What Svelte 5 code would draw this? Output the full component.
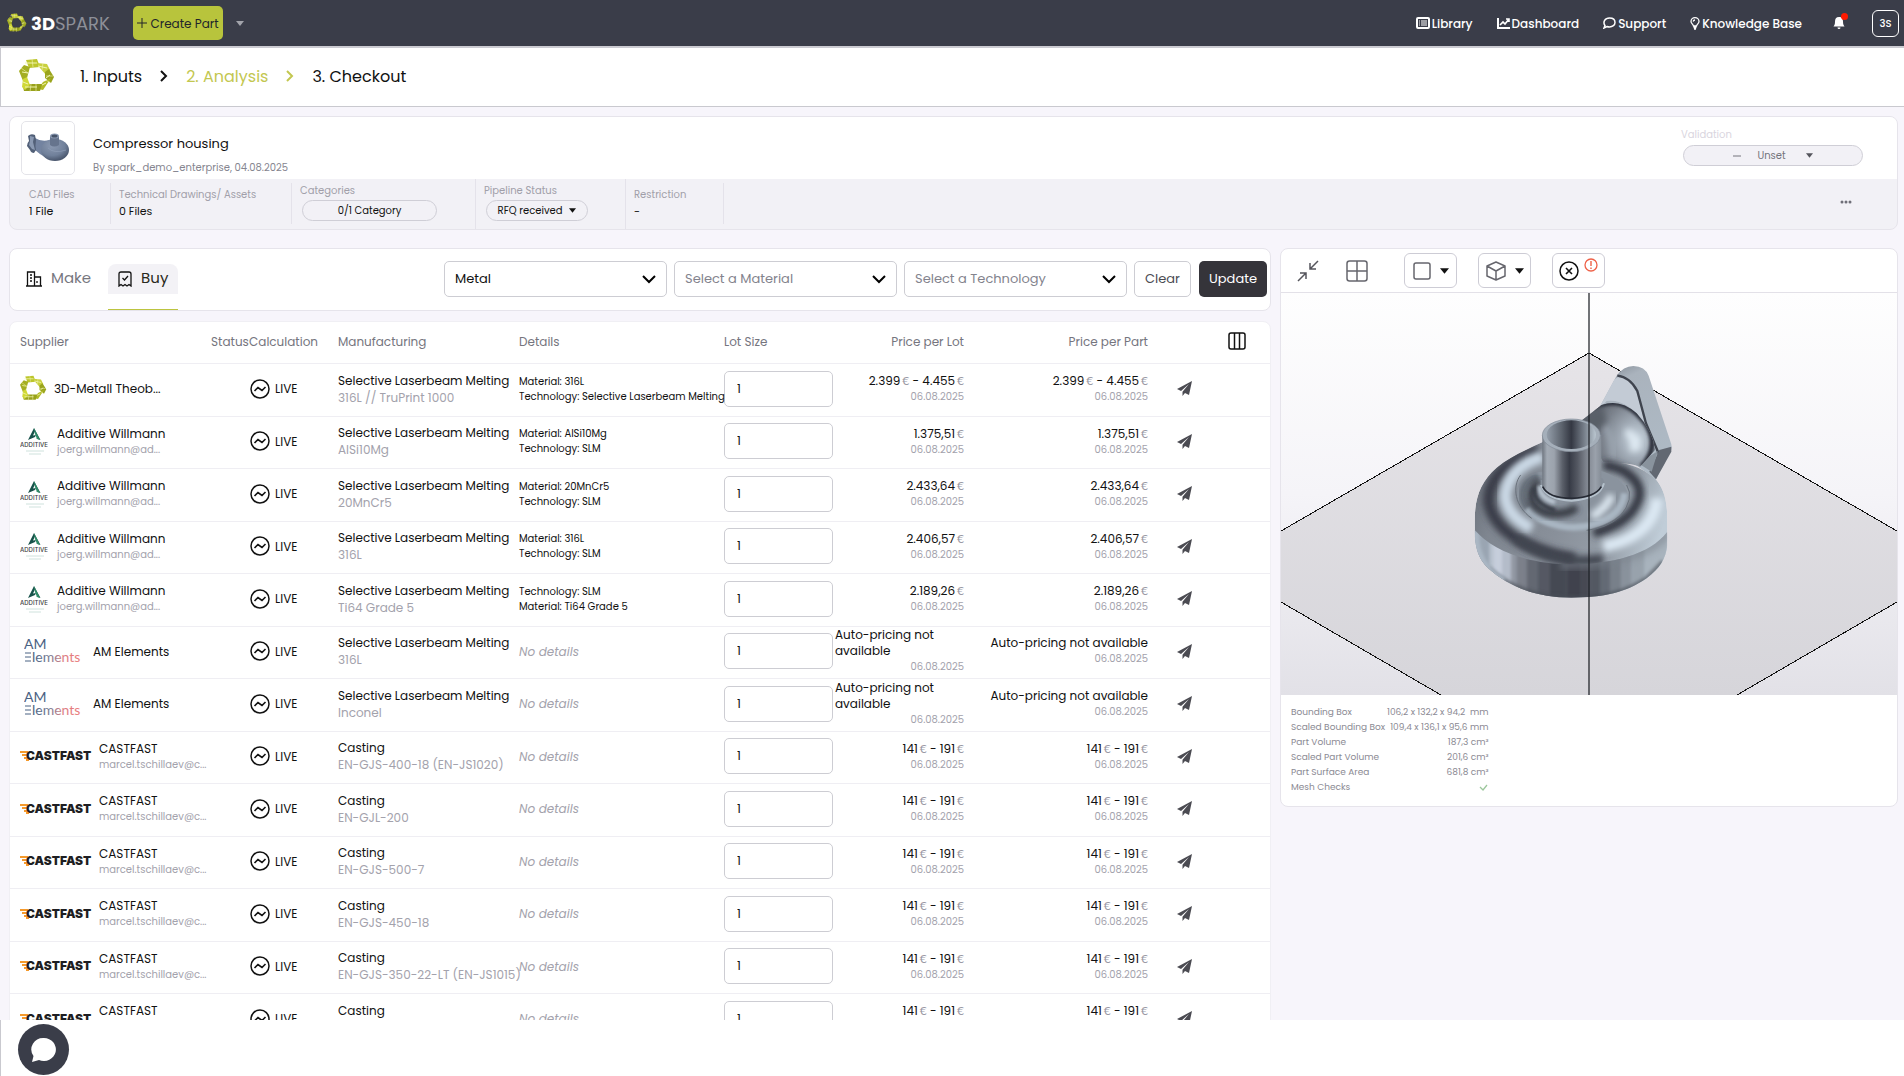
<script lang="ts">
	type Kind = 'spark' | 'additive' | 'am' | 'castfast';
	type Offer = {
		kind: Kind;
		supplier: string;
		mail?: string;
		process: string;
		material: string;
		details?: string[];
		price?: string[];
		lot: number;
	};

	const DATE = '06.08.2025';
	const SLM = 'Selective Laserbeam Melting';

	function additive(material: string, details: string[], price: string): Offer {
		return {
			kind: 'additive',
			supplier: 'Additive Willmann',
			mail: 'joerg.willmann@ad...',
			process: SLM,
			material,
			details,
			price: [price],
			lot: 1
		};
	}

	function castfast(material: string): Offer {
		return {
			kind: 'castfast',
			supplier: 'CASTFAST',
			mail: 'marcel.tschillaev@c...',
			process: 'Casting',
			material,
			price: ['141', '191'],
			lot: 1
		};
	}

	let offers: Offer[] = $state([
		{
			kind: 'spark',
			supplier: '3D-Metall Theob...',
			process: SLM,
			material: '316L // TruPrint 1000',
			details: ['Material: 316L', 'Technology: Selective Laserbeam Melting'],
			price: ['2.399', '4.455'],
			lot: 1
		},
		additive('AlSi10Mg', ['Material: AlSi10Mg', 'Technology: SLM'], '1.375,51'),
		additive('20MnCr5', ['Material: 20MnCr5', 'Technology: SLM'], '2.433,64'),
		additive('316L', ['Material: 316L', 'Technology: SLM'], '2.406,57'),
		additive('Ti64 Grade 5', ['Technology: SLM', 'Material: Ti64 Grade 5'], '2.189,26'),
		{ kind: 'am', supplier: 'AM Elements', process: SLM, material: '316L', lot: 1 },
		{ kind: 'am', supplier: 'AM Elements', process: SLM, material: 'Inconel', lot: 1 },
		castfast('EN-GJS-400-18 (EN-JS1020)'),
		castfast('EN-GJL-200'),
		castfast('EN-GJS-500-7'),
		castfast('EN-GJS-450-18'),
		castfast('EN-GJS-350-22-LT (EN-JS1015)'),
		castfast('')
	]);

	const stats = [
		['Bounding Box', '106,2 x 132,2 x 94,2  mm'],
		['Scaled Bounding Box', '109,4 x 136,1 x 95,6 mm'],
		['Part Volume', '187,3 cm³'],
		['Scaled Part Volume', '201,6 cm³'],
		['Part Surface Area', '681,8 cm³']
	];

	// Facets of the outer wall: x, width, shade
	const facets: [number, number, string][] = [
		[40, 48, '#9aa5b2'],
		[88, 14, '#b9c3cf'],
		[102, 24, '#c6cedb'],
		[126, 28, '#b4bcc9'],
		[154, 16, '#9298a3'],
		[170, 30, '#7c808a'],
		[200, 34, '#646872'],
		[234, 36, '#555963'],
		[270, 50, '#454953'],
		[320, 40, '#3f434d'],
		[360, 28, '#464a53'],
		[388, 32, '#535862'],
		[420, 30, '#646a74'],
		[450, 34, '#78808a'],
		[484, 30, '#89929c'],
		[514, 40, '#98a2ac'],
		[554, 70, '#a8b3bd']
	];
</script>

{#snippet sparkMark()}
	<svg class="mark" viewBox="0 0 36 36" aria-hidden="true">
		<path d="M7 2L18 1l3 8-11 1z" fill="#bcc52c" />
		<path d="M0 13l5-6 6 2-3 11-4 3z" fill="#a4ae22" />
		<path d="M18 5l10 1 3 6-4 5-6-7z" fill="#c9d03f" />
		<path d="M30 11l5 8-3 6-6-5 0-6z" fill="#9aa41c" />
		<path d="M32 20l-8 12-5-1 5-7z" fill="#b2bb27" />
		<path d="M23 26l-2 7H5l-1-4 4-3z" fill="#98a11b" />
		<path d="M4 21l4-2 3 8-5 5-3-3z" fill="#d0d836" />
		<g fill="none" stroke="#f2f5b0">
			<path d="M6 5l12 0M19 8l9 2M3 14l6 1M31 17l-4 3M27 25l-4 2M18 29H6M4 24l5 2" />
			<path d="M13 1l1 8M24 5l-1 7M2 10l7 5M34 18h-7M12 26l-1 8M17 26l0 8M27 22l4 3" stroke-opacity=".6" />
		</g>
	</svg>
{/snippet}

{#snippet caret()}
	<svg class="caret" viewBox="0 0 8 5" aria-hidden="true"><path d="M0 0h8L4 5z" fill="currentColor" /></svg>
{/snippet}

{#snippet chevron()}
	<svg class="chevron" viewBox="0 0 14 14" aria-hidden="true">
		<path d="M1 4l6 6 6-6" fill="none" stroke="#000" stroke-width="2" />
	</svg>
{/snippet}

{#snippet stepArrow()}
	<svg class="step-arrow" viewBox="0 0 8 12" aria-hidden="true">
		<path d="M1 1l5 5-5 5" fill="none" stroke="currentColor" stroke-width="2" />
	</svg>
{/snippet}

{#snippet price(offer: Offer)}
	{#if offer.price}
		<div class="amount">
			{#each offer.price as value, i}{#if i > 0}{' - '}{/if}{value}<span class="unit">€</span>{/each}
		</div>
	{:else}
		<div class="unavailable">Auto-pricing not available</div>
	{/if}
	<div class="date">{DATE}</div>
{/snippet}

<div class="page">
	<header class="topbar">
		<a class="brand" href="#home">
			{@render sparkMark()}
			<span><b>3D</b>SPARK</span>
		</a>
		<button class="create" type="button">
			<svg viewBox="0 0 10 10" width="10" height="10" aria-hidden="true">
				<path d="M5 0v10M0 5h10" stroke="currentColor" />
			</svg>
			Create Part
		</button>
		<button class="create-more" type="button" aria-label="More create options">{@render caret()}</button>

		<nav class="links">
			<a href="#library">
				<svg viewBox="0 0 14 12" width="14" height="12" aria-hidden="true">
					<rect x="1" y="1" width="12" height="10" rx="1" fill="none" stroke="#fff" stroke-width="2" />
					<path d="M3 4h1M3 6h1M3 8h1M5 4h6M5 6h6M5 8h6" stroke="#fff" />
				</svg>
				Library
			</a>
			<a href="#dashboard">
				<svg viewBox="0 0 13 12" width="13" height="12" aria-hidden="true">
					<path d="M1 1v10h12" fill="none" stroke="#fff" stroke-width="2" />
					<path d="M3 8l3-3 2 2 4-5M9 2h3v3" fill="none" stroke="#fff" stroke-width="1.6" />
				</svg>
				Dashboard
			</a>
			<a href="#support">
				<svg viewBox="0 0 13 12" width="13" height="12" aria-hidden="true">
					<path d="M2 8.5C-.5 5 2 1 6.500 1S12 3 12 5.500 9.500 10 6.500 10q-1.500 0-2.500-.5L1 11z" fill="none" stroke="#fff" stroke-width="1.500" />
				</svg>
				Support
			</a>
			<a href="#knowledge">
				<svg viewBox="0 0 10 13" width="10" height="13" aria-hidden="true">
					<path d="M3.500 9C3 7 1 6.500 1 4.500a4 3.800 0 018 0C9 6.500 7 7 6.500 9zM3.500 10.500h3M4 12h2M3.200 4.500Q3.500 3 5 3" fill="none" stroke="#fff" stroke-width="1.300" />
				</svg>
				Knowledge Base
			</a>
		</nav>
		<button class="bell" type="button" aria-label="Notifications">
			<svg viewBox="0 0 12 14" width="12" height="14" aria-hidden="true">
				<path d="M6 1C3 1 2 3 2 5.500S1.500 9 .5 10.500h11C10.500 9 10 8 10 5.500S9 1 6 1zM4.500 11.500h3a1.500 1.500 0 01-3 0z" fill="#fff" />
			</svg>
			<span class="dot"></span>
		</button>
		<button class="avatar" type="button">3S</button>
	</header>

	<nav class="steps">
		{@render sparkMark()}
		<a href="#inputs">1. Inputs</a>
		{@render stepArrow()}
		<a class="current" href="#analysis">2. Analysis</a>
		<span class="current">{@render stepArrow()}</span>
		<a href="#checkout">3. Checkout</a>
	</nav>

	<main>
		<section class="part">
			<div class="part-head">
				<div class="thumb">
					<svg viewBox="0 0 44 30" width="44" height="30" aria-hidden="true">
						<defs>
							<radialGradient id="thumb-body" cx=".4" cy=".3" r=".75">
								<stop offset="0" stop-color="#8c9ab2" />
								<stop offset=".6" stop-color="#70809a" />
								<stop offset="1" stop-color="#414d63" />
							</radialGradient>
						</defs>
						<path d="M9 5q6 4 15 2l4 20q-9-1-19-10z" fill="#7383a0" />
						<ellipse cx="29" cy="17" rx="14" ry="11" fill="url(#thumb-body)" />
						<path d="M2 3q3-3 7-1l1 5q-1 6 0 10l-2 3q-3 0-4-3l-3-4q0-3 2-5z" fill="#526078" />
						<path d="M4 3l4 1-1 5 2 8-3-1-3-4 1-4z" fill="#8a99b2" />
						<path d="M22 15q6 6 18 2" fill="none" stroke="#93a2bb" stroke-opacity=".6" />
						<path d="M24 3v9q4 3 9 0V3z" fill="#66748d" />
						<ellipse cx="28.500" cy="3" rx="4.500" ry="2.500" fill="#8d9bb3" />
						<ellipse cx="28.500" cy="3" rx="3" ry="1.500" fill="#465369" />
					</svg>
				</div>
				<div class="part-title">
					<h1>Compressor housing</h1>
					<p>By spark_demo_enterprise, 04.08.2025</p>
				</div>
				<div class="validation">
					<span>Validation</span>
					<button class="pill" type="button">
						<svg viewBox="0 0 8 2" width="8" height="2" aria-hidden="true"><path d="M0 1h8" stroke="currentColor" /></svg>
						Unset{@render caret()}
					</button>
				</div>
			</div>
			<div class="facts">
				<div class="fact cad"><span>CAD Files</span><strong>1 File</strong></div>
				<div class="fact drawings"><span>Technical Drawings/ Assets</span><strong>0 Files</strong></div>
				<div class="fact tall categories">
					<span>Categories</span><button class="pill" type="button">0/1 Category</button>
				</div>
				<div class="fact tall pipeline">
					<span>Pipeline Status</span>
					<button class="pill" type="button">RFQ received {@render caret()}</button>
				</div>
				<div class="fact restriction"><span>Restriction</span><strong>-</strong></div>
				<button class="more" type="button" aria-label="More actions">
					<svg viewBox="0 0 12 4" width="12" height="4" aria-hidden="true">
						<g fill="#6f6f78"><circle cx="2" cy="2" r="1.500" /><circle cx="6" cy="2" r="1.500" /><circle cx="10" cy="2" r="1.500" /></g>
					</svg>
				</button>
			</div>
		</section>

		<div class="columns">
			<div class="left">
				<section class="filters">
					<div class="tabs">
						<button class="tab" type="button">
							<svg viewBox="0 0 16 16" width="16" height="16" aria-hidden="true">
								<path d="M1.500 15V1h7v14M8.500 6h6v9M0 15h16M4 4h2M4 7h2M4 10h2M11 10v2" fill="none" stroke="currentColor" stroke-width="1.300" />
							</svg>
							<span>Make</span>
						</button>
						<button class="tab active" type="button">
							<svg viewBox="0 0 14 16" width="14" height="16" aria-hidden="true">
								<path d="M1 15V3q0-2 2-2h8q2 0 2 2v12l-2-1.500L9 15l-2-1.500L5 15l-2-1.500zM4.500 7l2 2 3.500-4" fill="none" stroke="currentColor" stroke-width="1.300" />
							</svg>
							<span>Buy</span>
						</button>
					</div>
					<div class="select">
						<select class="chosen" aria-label="Material group"><option>Metal</option></select>
						{@render chevron()}
					</div>
					<div class="select">
						<select aria-label="Material"><option>Select a Material</option></select>
						{@render chevron()}
					</div>
					<div class="select">
						<select aria-label="Technology"><option>Select a Technology</option></select>
						{@render chevron()}
					</div>
					<button class="btn clear" type="button">Clear</button>
					<button class="btn update" type="button">Update</button>
				</section>

				<section class="offers">
					<table>
						<colgroup>
							<col class="c-supplier" /><col class="c-status" /><col class="c-calc" />
							<col class="c-manu" /><col class="c-details" /><col class="c-lot" />
							<col class="c-lotprice" /><col class="c-partprice" /><col class="c-send" /><col class="c-cols" />
						</colgroup>
						<thead>
							<tr>
								<th class="first">Supplier</th>
								<th>Status</th>
								<th>Calculation</th>
								<th>Manufacturing</th>
								<th>Details</th>
								<th>Lot Size</th>
								<th class="num">Price per Lot</th>
								<th class="num">Price per Part</th>
								<th></th>
								<th>
									<button class="icon-btn" type="button" aria-label="Choose columns">
										<svg viewBox="0 0 18 18" width="18" height="18" aria-hidden="true">
											<rect x="1" y="1" width="16" height="16" rx="2" fill="none" stroke="#111" stroke-width="1.500" />
											<path d="M6.500 1v16M11.500 1v16" stroke="#111" stroke-width="1.500" />
										</svg>
									</button>
								</th>
							</tr>
						</thead>
						<tbody>
							{#each offers as offer}
								<tr>
									<td class="first">
										<div class="supplier {offer.kind}">
											{#if offer.kind === 'spark'}
												{@render sparkMark()}
											{:else if offer.kind === 'additive'}
												<svg viewBox="0 0 30 30" width="30" height="30" aria-hidden="true">
													<path d="M14 2l-6 12 7-3 1-2-3 .500 2-4 2.500 5-1 2 4 1.500z" fill="#17524a" />
													<path d="M14 2l2 4 4 8-3-1-2-5z" fill="#2f8d68" />
													<text x="0" y="21" class="additive-word">ADDITIVE</text>
													<path d="M6 25h18M9 28h12" stroke="#cfe2dd" />
												</svg>
											{:else if offer.kind === 'am'}
												<svg viewBox="0 0 60 34" width="60" height="34" aria-hidden="true">
													<defs>
														<linearGradient id="am-fade" gradientUnits="userSpaceOnUse" x1="8" y1="0" x2="60" y2="0">
															<stop offset="0" stop-color="#4a6283" />
															<stop offset=".35" stop-color="#7d7f95" />
															<stop offset=".6" stop-color="#dc7f85" />
															<stop offset="1" stop-color="#ee7a78" />
														</linearGradient>
													</defs>
													<text x="0" y="15" class="am-word" fill="#4a6283">AM</text>
													<path d="M1 19h6M1 23h6M1 27h6" stroke="#4a6283" />
													<text x="8" y="28" class="am-word" fill="url(#am-fade)">lements</text>
												</svg>
											{:else}
												<svg viewBox="0 0 73 16" width="73" height="16" aria-hidden="true">
													<path d="M0 4h8M2 7h5M4 10h4M6 12h3" stroke="#f59a2c" stroke-width="2" />
													<text x="6" y="12" class="cast-word">CASTFAST</text>
												</svg>
											{/if}
											<div>
												<div>{offer.supplier}</div>
												{#if offer.mail}<div class="mail">{offer.mail}</div>{/if}
											</div>
										</div>
									</td>
									<td></td>
									<td>
										<div class="live">
											<svg viewBox="0 0 20 20" width="20" height="20" aria-hidden="true">
												<circle cx="10" cy="10" r="9" fill="none" stroke="#111" stroke-width="1.500" />
												<path d="M4.500 12l3.500-3.500 4 3 3.500-3.500" fill="none" stroke="#111" stroke-width="1.600" />
											</svg>
											LIVE
										</div>
									</td>
									<td>
										<div>{offer.process}</div>
										<div class="material">{offer.material}</div>
									</td>
									<td>
										{#if offer.details}
											{#each offer.details as line}<div class="detail">{line}</div>{/each}
										{:else}
											<em>No details</em>
										{/if}
									</td>
									<td><input class="lot" type="text" aria-label="Lot size" bind:value={offer.lot} /></td>
									<td class="num lotprice">{@render price(offer)}</td>
									<td class="num">{@render price(offer)}</td>
									<td class="send">
										<button class="icon-btn" type="button" aria-label="Send request">
											<svg viewBox="0 0 15 15" width="15" height="15" aria-hidden="true">
												<path d="M15 0L0 8l4 2L12 3 5.500 10.800V15l2.500-3 4 2z" fill="#4b4b52" />
											</svg>
										</button>
									</td>
									<td></td>
								</tr>
							{/each}
						</tbody>
					</table>
				</section>
			</div>

			<section class="viewer">
				<div class="tools">
					<button class="icon-btn" type="button" aria-label="Collapse">
						<svg viewBox="0 0 22 22" width="22" height="22" aria-hidden="true">
							<path d="M21 1l-8 8M13 3v6h6M1 21l8-8M3 13h6v6" fill="none" stroke="#55555c" stroke-width="1.500" />
						</svg>
					</button>
					<button class="icon-btn grid-btn" type="button" aria-label="Split view">
						<svg viewBox="0 0 22 22" width="22" height="22" aria-hidden="true">
							<path d="M3.500 1h15Q21 1 21 3.500v15q0 2.500-2.500 2.500h-15Q1 21 1 18.500v-15Q1 1 3.500 1zM11 1v20M1 11h20" fill="none" stroke="#66666d" stroke-width="1.500" />
						</svg>
					</button>
					<button class="tool" type="button" aria-label="Shading">
						<svg viewBox="0 0 18 18" width="18" height="18" aria-hidden="true">
							<rect x="1" y="1" width="16" height="16" rx="2" fill="none" stroke="#66666d" stroke-width="1.500" />
						</svg>
						{@render caret()}
					</button>
					<button class="tool" type="button" aria-label="View direction">
						<svg viewBox="0 0 20 20" width="20" height="20" aria-hidden="true">
							<path d="M10 1l9 4v10l-9 4-9-4V5zM1 5l9 5 9-5M10 10v9" fill="none" stroke="#66666d" stroke-width="1.500" stroke-linejoin="round" />
						</svg>
						{@render caret()}
					</button>
					<button class="tool errors" type="button" aria-label="Mesh errors">
						<svg viewBox="0 0 20 20" width="20" height="20" aria-hidden="true">
							<circle cx="10" cy="10" r="9" fill="none" stroke="#111" stroke-width="1.500" />
							<path d="M7 7l6 6M13 7l-6 6" stroke="#111" stroke-width="1.600" />
						</svg>
						<svg class="alert" viewBox="0 0 14 14" width="14" height="14" aria-hidden="true">
							<circle cx="7" cy="7" r="6" fill="none" stroke="#ee6148" stroke-width="1.300" />
							<path d="M7 3v5M7 9.500V11" stroke="#ee6148" stroke-width="1.400" />
						</svg>
					</button>
				</div>

				<svg class="scene" viewBox="0 0 616 402" role="img" aria-label="3D view of the compressor housing">
					<defs>
						<linearGradient id="sky" x1="0" y1="0" x2="0" y2="1">
							<stop offset="0" stop-color="#fefefe" />
							<stop offset=".5" stop-color="#f5f4f8" />
							<stop offset="1" stop-color="#e2e1e7" />
						</linearGradient>
						<linearGradient id="floor" x1="0" y1="0" x2="0" y2="1">
							<stop offset="0" stop-color="#e6e4e8" />
							<stop offset="1" stop-color="#d6d5da" />
						</linearGradient>
						<linearGradient id="pipe" x1="0" y1="0" x2="1" y2="0">
							<stop offset="0" stop-color="#6f7680" />
							<stop offset=".08" stop-color="#a3abb5" />
							<stop offset=".2" stop-color="#9ca3ad" />
							<stop offset=".34" stop-color="#5b606a" />
							<stop offset=".46" stop-color="#373b46" />
							<stop offset=".6" stop-color="#555963" />
							<stop offset=".74" stop-color="#7d838d" />
							<stop offset=".9" stop-color="#9aa1ab" />
							<stop offset="1" stop-color="#858d97" />
						</linearGradient>
						<linearGradient id="bore" x1="0" y1="0" x2="1" y2="0">
							<stop offset="0" stop-color="#959fab" />
							<stop offset=".3" stop-color="#5d646e" />
							<stop offset=".5" stop-color="#343843" />
							<stop offset=".75" stop-color="#747c87" />
							<stop offset="1" stop-color="#bac6d0" />
						</linearGradient>
						<linearGradient id="shell" x1="0" y1="0.2" x2="1" y2="0.5">
							<stop offset="0" stop-color="#6a707a" />
							<stop offset=".18" stop-color="#7f8690" />
							<stop offset=".5" stop-color="#89909a" />
							<stop offset=".8" stop-color="#97a0aa" />
							<stop offset="1" stop-color="#c0cdd8" />
						</linearGradient>
						<radialGradient id="elbow" cx=".72" cy=".48" r=".62">
							<stop offset="0" stop-color="#c9d5df" />
							<stop offset=".3" stop-color="#a4aeb9" />
							<stop offset=".65" stop-color="#7c838d" />
							<stop offset="1" stop-color="#5c616b" />
						</radialGradient>
						<linearGradient id="flange" x1="0" y1="0" x2="0.3" y2="1">
							<stop offset="0" stop-color="#7d8590" />
							<stop offset=".2" stop-color="#aab3bd" />
							<stop offset="1" stop-color="#aebac5" />
						</linearGradient>
						<filter id="soft" x="-20%" y="-20%" width="140%" height="140%"><feGaussianBlur stdDeviation="10" /></filter>
						<filter id="fine" x="-20%" y="-20%" width="140%" height="140%"><feGaussianBlur stdDeviation="4" /></filter>
						<clipPath id="body-clip">
							<path d="M44 500C44 430 60 382 110 338C150 305 200 285 246 262L370 190L470 250L520 325L585 370C610 400 622 430 622 500V570C618 610 600 640 560 670C500 712 430 728 334 728C240 728 150 700 85 640C55 610 44 580 44 500Z" />
						</clipPath>
						<clipPath id="wall-clip">
							<path d="M44 525C100 590 210 628 334 628C450 628 570 600 622 530V570C618 610 600 640 560 670C500 712 430 728 334 728C240 728 150 700 85 640C55 610 44 580 44 525Z" />
						</clipPath>
						<clipPath id="elbow-clip">
							<path d="M360 200L425 150Q480 130 530 175Q580 230 585 285L540 335Q470 310 425 350L370 390Z" />
						</clipPath>
					</defs>
					<rect width="616" height="402" fill="url(#sky)" />
					<path d="M308 60L616 238V309L456 402H160L0 309V238Z" fill="url(#floor)" />
					<path d="M0 238L308 60L616 238M0 309L160 402M616 309L456 402" fill="none" stroke="#111" shape-rendering="crispEdges" />

					<g transform="translate(179 62) scale(.3333)">
						<path d="M414 165L470 62Q490 34 520 33Q555 34 566 62L632 262Q638 275 632 290L588 373L520 325L480 160Z" fill="url(#flange)" />
						<path d="M416 162L462 76Q480 56 500 68Q530 85 550 190L556 205Q500 130 440 138Z" fill="#c3cbd5" />
						<path d="M472 62Q510 66 532 108L558 205L598 300" fill="none" stroke="#3f444e" stroke-width="7" />
						<path d="M598 285L634 275V290L588 373L568 350Z" fill="#626872" />
						<path d="M535 325L594 288L575 350Z" fill="#89939d" />

						<g clip-path="url(#elbow-clip)">
							<rect x="350" y="120" width="250" height="280" fill="url(#elbow)" />
							<path d="M400 160Q490 110 560 210Q600 275 545 335" fill="none" stroke="#2f333d" stroke-width="16" filter="url(#fine)" />
							<path d="M500 220Q545 240 540 285L510 290Q518 250 495 240Z" fill="#dfeaf3" filter="url(#soft)" />
							<path d="M430 210Q460 240 460 310" fill="none" stroke="#9ea8b3" stroke-width="14" filter="url(#soft)" />
							<path d="M360 200L425 150L440 200L380 260Z" fill="#595e68" filter="url(#soft)" />
						</g>

						<g clip-path="url(#body-clip)">
							<path d="M44 500C44 430 60 382 110 338C150 305 200 285 246 262L370 230L430 320Q530 320 585 370C610 400 622 430 622 500V728H44Z" fill="url(#shell)" />
							<!-- outer ring -->
							<path d="M235 285C150 305 84 370 86 440C100 530 210 590 345 612" fill="none" stroke="#3a3e48" stroke-width="36" filter="url(#soft)" />
							<path d="M250 305C175 325 138 375 136 425C140 465 165 495 215 520" fill="none" stroke="#cbd9e6" stroke-width="36" filter="url(#soft)" />
							<path d="M430 330C510 340 560 395 530 445C515 485 465 515 400 535" fill="none" stroke="#30343f" stroke-width="28" filter="url(#soft)" />
							<path d="M430 575C535 555 585 500 592 430" fill="none" stroke="#dbe8f3" stroke-width="36" filter="url(#soft)" />
							<!-- inner bowl -->
							<path d="M240 350C165 365 155 430 190 470C240 520 340 535 400 518C480 500 520 445 500 405C485 370 440 350 410 345Z" fill="#8a939e" />
							<path d="M235 365C180 380 175 430 205 460" fill="none" stroke="#6c747f" stroke-width="22" filter="url(#fine)" />
							<path d="M200 462C250 515 340 528 400 508C460 493 490 455 493 415" fill="none" stroke="#a9b6c2" stroke-width="20" filter="url(#fine)" />
							<path d="M240 380C200 405 205 450 250 470C285 482 330 476 350 455" fill="none" stroke="#30343e" stroke-width="24" filter="url(#soft)" />
							<path d="M222 400Q220 445 285 466" fill="none" stroke="#373c46" stroke-width="12" filter="url(#fine)" />
							<path d="M238 392Q240 430 285 442" fill="none" stroke="#bbc7d3" stroke-width="12" filter="url(#fine)" />
							<path d="M395 485Q440 460 455 420" fill="none" stroke="#dfeaf3" stroke-width="24" filter="url(#soft)" />
							<path d="M170 550Q290 636 430 612" fill="none" stroke="#434751" stroke-width="30" filter="url(#soft)" />
							<path d="M182 360C155 395 165 455 215 490M500 390Q525 430 480 485Q440 520 380 526" fill="none" stroke="#69717b" stroke-width="3" />
						</g>
						<g clip-path="url(#wall-clip)">
							<g filter="url(#fine)">
								{#each facets as [x, width, shade]}
									<rect {x} y="500" {width} height="250" fill={shade} />
								{/each}
							</g>
							<path d="M300 628C450 628 570 600 622 530" fill="none" stroke="#7b838d" stroke-width="34" opacity=".5" filter="url(#soft)" />
							<path d="M85 640C150 700 240 728 334 728C430 728 500 712 560 670L610 620" fill="none" stroke="#4a4f59" stroke-width="14" opacity=".6" filter="url(#fine)" />
							<path d="M46 530Q42 630 130 680" fill="none" stroke="#aab7c4" stroke-width="24" filter="url(#fine)" />
						</g>

						<path d="M242 375Q238 425 300 438Q375 450 425 408Q440 390 428 370Z" fill="#858e99" />
						<path d="M243 390Q258 435 335 437Q420 432 432 385" fill="none" stroke="#b5c1cc" stroke-width="6" />
						<path d="M247 240V395Q265 430 335 430Q405 428 424 395V240Z" fill="url(#pipe)" />
						<ellipse cx="334" cy="241" rx="87" ry="49" fill="#a5afba" stroke="#828b97" stroke-width="2" />
						<ellipse cx="334" cy="239" rx="74" ry="43" fill="url(#bore)" />
						<path d="M248 395Q265 430 335 430Q405 428 424 395" fill="none" stroke="#262a34" stroke-width="5" />
					</g>
					<path d="M308 0V402" stroke="#1c1e24" stroke-opacity=".62" stroke-width="2" />
				</svg>

				<dl class="stats">
					{#each stats as [label, value]}
						<dt>{label}</dt>
						<dd>{value}</dd>
					{/each}
					<dt>Mesh Checks</dt>
					<dd>
						<svg viewBox="0 0 9 7" width="9" height="7" role="img" aria-label="passed">
							<path d="M1 3l3 3 4-5" fill="none" stroke="#9cc79c" stroke-width="1.300" />
						</svg>
					</dd>
				</dl>
			</section>
		</div>
	</main>

	<footer>
		<button class="chat" type="button" aria-label="Open chat">
			<svg viewBox="0 0 26 26" width="26" height="26" aria-hidden="true">
				<path d="M13 1a12 11.500 0 11-5 22L1 25l1.500-6A12 11.500 0 0113 1z" fill="#fff" />
			</svg>
		</button>
	</footer>
</div>

<style>
	:global(body) {
		background: #f7f5fb;
	}

	.page {
		height: 100vh;
		display: flex;
		flex-direction: column;
		overflow: hidden;
		font-family: Poppins, Inter, sans-serif;
		font-size: 12px;
		line-height: 17px;
		color: #111;
	}

	.page * {
		box-sizing: border-box;
	}

	button,
	input,
	select {
		font: inherit;
		color: inherit;
	}

	button {
		display: inline-flex;
		align-items: center;
		justify-content: center;
		padding: 0;
		border: 0;
		background: none;
		cursor: pointer;
	}

	a {
		color: inherit;
		text-decoration: none;
	}

	svg {
		flex: none;
		display: block;
	}

	.mark {
		width: 36px;
		height: 36px;
	}

	.caret {
		width: 8px;
		height: 5px;
	}

	/* Top bar */
	.topbar {
		flex: none;
		display: flex;
		align-items: center;
		height: 48px;
		padding: 0 5px 0 7px;
		border-bottom: 2px solid #cbcbd1;
		background: #3a3d49;
		color: #fff;
	}

	.brand {
		display: flex;
		align-items: center;
		gap: 4px;
		width: 126px;
		font-size: 18px;
		font-weight: 400;
		color: #8d8f98;
	}

	.brand .mark {
		width: 20px;
		height: 20px;
	}

	.brand b {
		font-weight: 700;
		color: #fff;
	}

	.create {
		gap: 3px;
		width: 90px;
		height: 34px;
		border-radius: 5px;
		background: #b8c43c;
		color: #22242b;
		white-space: nowrap;
	}

	.create-more {
		width: 34px;
		height: 34px;
		color: #a2a4ab;
	}

	.links {
		display: flex;
		gap: 24px;
		margin-left: auto;
		font-weight: 500;
	}

	.links a {
		display: flex;
		align-items: center;
		gap: 2px;
	}

	.bell {
		position: relative;
		width: 16px;
		height: 20px;
		margin: 0 25px 0 29px;
	}

	.dot {
		position: absolute;
		top: 0;
		right: -1px;
		width: 7px;
		height: 7px;
		border-radius: 50%;
		background: #ff1a00;
	}

	.avatar {
		width: 27px;
		height: 27px;
		border: 1px solid #fff;
		border-radius: 6px;
		font-size: 10px;
		font-weight: 500;
	}

	/* Steps */
	.steps {
		flex: none;
		display: flex;
		align-items: center;
		gap: 18px;
		height: 59px;
		padding: 0 18px 2px;
		border: solid #c9c9cf;
		border-width: 0 0 1px 1px;
		background: #fff;
		font-size: 16px;
	}

	.steps .mark {
		margin-right: 7px;
	}

	.step-arrow {
		width: 8px;
		height: 12px;
	}

	.current {
		color: #c3c750;
	}

	main {
		flex: 1;
		min-height: 0;
		padding: 9px 6px 0 9px;
		overflow: hidden;
	}

	/* Part card */
	.part {
		height: 114px;
		border: 1px solid #e6e4eb;
		border-radius: 8px;
		background: #f2f1f6;
		overflow: hidden;
	}

	.part-head {
		display: flex;
		height: 62px;
		padding: 4px 34px 0 11px;
		background: #fff;
	}

	.thumb {
		display: grid;
		place-items: center;
		width: 54px;
		height: 54px;
		border: 1px solid #e4e4e9;
		border-radius: 5px;
	}

	.part-title {
		margin-left: 18px;
		padding-top: 14px;
	}

	h1 {
		margin: 0;
		font-size: 13px;
		font-weight: 400;
		line-height: 17px;
	}

	p {
		margin: 7px 0 0;
		font-size: 10px;
		color: #85858f;
	}

	.validation {
		margin-left: auto;
		padding-top: 5px;
		font-size: 10px;
		color: #d9d5de;
	}

	.validation > span {
		display: block;
		margin-left: -2px;
	}

	.pill {
		height: 21px;
		border: 1px solid #cfced6;
		border-radius: 11px;
		font-size: 10px;
	}

	.pill .caret {
		width: 7px;
		height: 5px;
	}

	.validation .pill {
		gap: 16px;
		width: 180px;
		margin-top: 2px;
		background: #f2f1f6;
		color: #74747c;
	}

	.validation .caret {
		margin-left: 4px;
		color: #55555c;
	}

	.facts {
		display: flex;
		height: 50px;
	}

	.fact {
		display: flex;
		flex-direction: column;
		align-items: flex-start;
		margin: 4px 0 5px;
		padding: 3px 0 0 8px;
		border-right: 1px solid #e4e2ea;
		font-size: 10px;
		line-height: 17px;
	}

	.fact span {
		color: #a19fa9;
	}

	.fact strong {
		font-size: 11px;
		font-weight: 400;
	}

	.tall {
		margin: 0;
	}

	.tall .pill {
		margin: 1px 0 0 2px;
	}

	.cad {
		width: 101px;
		padding-left: 19px;
	}

	.drawings {
		width: 181px;
	}

	.categories {
		width: 184px;
	}

	.categories .pill {
		width: 135px;
	}

	.pipeline {
		width: 150px;
	}

	.pipeline .pill {
		gap: 7px;
		width: 102px;
	}

	.restriction {
		width: 98px;
	}

	.more {
		height: 46px;
		margin-left: auto;
		width: 24px;
		margin-right: 39px;
	}

	/* Columns */
	.columns {
		display: grid;
		grid-template-columns: 1262fr 618fr;
		gap: 9px;
		align-items: start;
		margin-top: 18px;
	}

	.left {
		min-width: 0;
	}

	.filters {
		display: flex;
		align-items: center;
		gap: 7px;
		height: 63px;
		padding: 0 3px 2px 0;
		border: 1px solid #e6e4eb;
		border-radius: 8px;
		background: #fff;
		font-size: 13px;
	}

	.tabs {
		flex: 1;
		align-self: stretch;
		display: flex;
		gap: 9px;
		padding: 15px 0 0 8px;
		font-size: 15px;
	}

	.tab {
		align-items: flex-start;
		gap: 9px;
		height: 46px;
		padding: 7px 8px 0;
		border-bottom: 1px solid transparent;
	}

	.tab span {
		margin-top: -2px;
		line-height: 17px;
		color: #77777f;
	}

	.tab.active {
		padding: 7px 10px 0;
		border-bottom-color: #bcc440;
		border-radius: 8px 8px 0 0;
		background: linear-gradient(#f3f2f6, #f3f2f6) top / 100% 30px no-repeat;
	}

	.tab.active span {
		color: #2a2a20;
	}

	.select {
		display: grid;
		align-items: center;
		width: 223px;
	}

	.select > :global(*) {
		grid-area: 1 / 1;
	}

	.select select {
		appearance: none;
		width: 100%;
		height: 36px;
		padding: 0 30px 0 10px;
		border: 1px solid #cdcdd3;
		border-radius: 5px;
		background: #fff;
		color: #83838d;
	}

	.select .chosen {
		color: #111;
	}

	.chevron {
		justify-self: end;
		width: 14px;
		height: 14px;
		margin-right: 11px;
		pointer-events: none;
	}

	.btn {
		height: 36px;
		border-radius: 5px;
	}

	.clear {
		width: 57px;
		border: 1px solid #cdcdd3;
		color: #4c4c54;
	}

	.update {
		width: 68px;
		margin-left: 1px;
		background: #35343a;
		color: #fff;
	}

	/* Offers */
	.offers {
		margin-top: 10px;
		border: 1px solid #f0eff4;
		border-radius: 8px;
		background: #fff;
		overflow: hidden;
	}

	table {
		width: 100%;
		table-layout: fixed;
		border-spacing: 0;
	}

	.c-supplier {
		width: 201px;
	}
	.c-status {
		width: 38px;
	}
	.c-calc {
		width: 89px;
	}
	.c-manu {
		width: 181px;
	}
	.c-details {
		width: 205px;
	}
	.c-lot {
		width: 111px;
	}
	.c-lotprice {
		width: 129px;
	}
	.c-partprice {
		width: 184px;
	}
	.c-send {
		width: 80px;
	}
	.c-cols {
		width: 42px;
	}

	th,
	td {
		padding: 0 0 3px;
		border-bottom: 1px solid #efeef3;
		text-align: left;
		white-space: nowrap;
	}

	th {
		height: 42px;
		font-weight: 400;
		color: #75757e;
	}

	td {
		height: 52px;
	}

	tbody tr:nth-child(odd) td {
		height: 53px;
	}

	.first {
		padding-left: 10px;
	}

	.num {
		text-align: right;
	}

	.supplier {
		display: flex;
		align-items: center;
		gap: 7px;
	}

	.supplier .mark {
		width: 27px;
		height: 27px;
	}

	.supplier.am {
		gap: 9px;
		padding-left: 4px;
	}

	.supplier.castfast {
		gap: 6px;
	}

	.mail {
		font-size: 10px;
		line-height: 16px;
		color: #a3a2ac;
	}

	.additive-word {
		font-family: Inter, sans-serif;
		font-size: 6px;
		font-weight: 500;
		fill: #3c3c42;
	}

	.am-word {
		font-family: Lato, sans-serif;
		font-size: 14px;
		font-weight: 400;
	}

	.cast-word {
		font-family: Inter, sans-serif;
		font-size: 12px;
		font-weight: 900;
		fill: #1e1e22;
	}

	.live {
		display: flex;
		align-items: center;
		gap: 5px;
		padding-left: 1px;
	}

	.material {
		min-height: 17px;
		color: #a3a2ac;
	}

	.detail {
		font-size: 10px;
		line-height: 15px;
	}

	em {
		color: #a3a2ac;
	}

	.lot {
		display: block;
		width: 109px;
		height: 36px;
		padding: 0 12px;
		border: 1px solid #cdcdd3;
		border-radius: 5px;
		background: #fff;
	}

	.amount {
		height: 17px;
	}

	.unit {
		margin-left: 2px;
		font-family: Lato, sans-serif;
		font-size: 12px;
		color: #9b9aa5;
	}

	.date {
		font-size: 10px;
		line-height: 16px;
		color: #a3a2ac;
	}

	/* Three lines have to fit the row height here */
	.unavailable {
		line-height: 16px;
	}

	.lotprice .unavailable {
		white-space: normal;
		text-align: left;
	}

	.send {
		padding-left: 29px;
	}

	.icon-btn {
		display: flex;
	}

	/* Viewer */
	.viewer {
		border: 1px solid #e6e4eb;
		border-radius: 8px;
		background: #fff;
		overflow: hidden;
	}

	.tools {
		display: flex;
		align-items: center;
		gap: 21px;
		height: 44px;
		padding-left: 16px;
		border-bottom: 1px solid #e3e1e8;
	}

	.grid-btn {
		margin: 0 15px 0 6px;
	}

	.tool {
		gap: 9px;
		width: 53px;
		height: 35px;
		border: 1px solid #cdccd5;
		border-radius: 6px;
	}

	.tool .caret {
		width: 9px;
		height: 6px;
	}

	.errors {
		gap: 5px;
	}

	.alert {
		align-self: flex-start;
		margin-top: 4px;
	}

	.scene {
		width: 100%;
		height: auto;
	}

	.stats {
		display: grid;
		grid-template-columns: auto auto;
		justify-content: start;
		column-gap: 2px;
		margin: 0;
		padding: 10px 10px 11px;
		font-size: 9px;
		line-height: 15px;
		color: #8b8a93;
	}

	.stats dd {
		display: flex;
		justify-content: flex-end;
		align-items: center;
		margin: 0;
		white-space: pre;
	}

	/* Footer */
	footer {
		flex: none;
		height: 56px;
		padding: 4px 0 0 17px;
		border: solid #c9c9cf;
		border-width: 0 0 0 1px;
		background: #fff;
	}

	.chat {
		width: 51px;
		height: 51px;
		border-radius: 50%;
		background: #3a3d49;
	}
</style>
